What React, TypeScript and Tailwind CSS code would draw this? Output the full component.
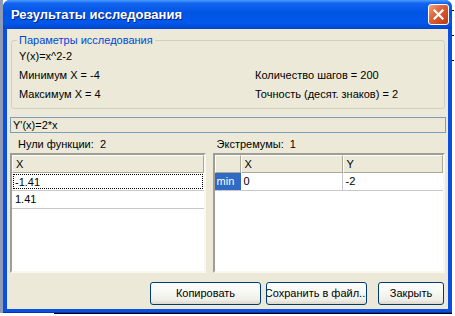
import React from "react";

const font = { fontFamily: '"Liberation Sans", Arial, sans-serif' };

function XpButton({ label, width }: { label: string; width: string }) {
  return (
    <button
      className={`${width} h-[23px] rounded-[3px] border border-[#003c74] bg-[linear-gradient(180deg,#ffffff_0%,#f7f7f3_45%,#efeee8_80%,#dcd8cc_100%)] text-[11px] leading-[13px] text-black flex items-center justify-center whitespace-nowrap overflow-hidden`}
    >
      {label}
    </button>
  );
}

function HeaderCell({ children, className = "" }: { children?: React.ReactNode; className?: string }) {
  return (
    <div
      className={`h-[18px] bg-[#ece9d8] border-t border-l border-t-white border-l-white border-b border-r border-b-[#aca899] border-r-[#aca899] pl-[2px] text-[11px] leading-[16px] ${className}`}
    >
      {children}
    </div>
  );
}

export default function App() {
  return (
    <div className="w-[455px] h-[316px] bg-white flex flex-col overflow-hidden" style={font}>
      <div className="h-[313px] flex">
        {/* strip of window behind */}
        <div className="w-[3px] h-[313px] bg-[#8e9ab6]" />

        {/* window */}
        <div className="w-[449px] h-[313px] flex flex-col rounded-t-[7px] bg-[#0a4fdf] border-b border-b-[#0032b8]">
          {/* title bar */}
          <div className="h-[29px] shrink-0 rounded-t-[7px] bg-[linear-gradient(180deg,#4c9cff_0%,#0f63ee_12%,#0054e3_45%,#0058ea_80%,#0244cc_100%)] flex items-center pl-[8px] pr-[3px]">
            <div className="flex-1 text-white font-bold text-[13px] leading-[16px] pt-[1px] [text-shadow:1px_1px_0_#0a1f80]">
              Результаты исследования
            </div>
            <div className="w-[21px] h-[21px] rounded-[3px] border border-white bg-[linear-gradient(135deg,#f2a483_0%,#e06a42_35%,#cf4b22_70%,#b83c1a_100%)] flex items-center justify-center">
              <svg width="11" height="11" viewBox="0 0 11 11">
                <path d="M1.5 1.5 L9.5 9.5 M9.5 1.5 L1.5 9.5" stroke="white" strokeWidth="2.2" strokeLinecap="square" />
              </svg>
            </div>
          </div>

          {/* client area */}
          <div className="flex-1 mx-[4px] mb-[3px] bg-[#ece9d8] flex flex-col px-[3px] text-[11px] leading-[13px] text-black">
            {/* group box */}
            <fieldset className="mt-[5px] ml-[1px] w-[434px] h-[75px] border border-[#d0d0bf] rounded-[3px]">
              <legend className="ml-[5px] px-[2px] text-[#0046d5] leading-[13px]">Параметры исследования</legend>
              <div className="pt-[3px] pl-[7px] flex flex-col gap-[6px]">
                <div>Y(x)=x^2-2</div>
                <div className="flex">
                  <div className="w-[236px]">Минимум X = -4</div>
                  <div>Количество шагов = 200</div>
                </div>
                <div className="flex">
                  <div className="w-[236px]">Максимум X = 4</div>
                  <div>Точность (десят. знаков) = 2</div>
                </div>
              </div>
            </fieldset>

            {/* derivative field */}
            <div className="mt-[8px] w-[436px] h-[16px] border border-[#7f9db9] bg-[#ece9d8] pl-[2px] leading-[14px]">
              Y'(x)=2*x
            </div>

            {/* tables */}
            <div className="mt-[5px] flex gap-[7px]">
              <div className="w-[196px] flex flex-col">
                <div className="pl-[8px] whitespace-pre h-[15px]">Нули функции:  2</div>
                <div className="h-[120px] border-2 border-t-[#a09e94] border-l-[#a09e94] border-b-[#f8f7f0] border-r-[#f8f7f0] bg-white flex flex-col">
                  <HeaderCell className="pl-[3px]">X</HeaderCell>
                  <div className="h-[18px] border-b border-[#c8c8c8] p-[1px]">
                    <div className="h-full border border-dotted border-black pl-[1px] leading-[14px]">-1.41</div>
                  </div>
                  <div className="h-[18px] border-b border-[#c8c8c8] pl-[3px] leading-[17px]">1.41</div>
                </div>
              </div>

              <div className="w-[233px] flex flex-col">
                <div className="pl-[4px] whitespace-pre h-[15px]">Экстремумы:  1</div>
                <div className="h-[120px] border-2 border-t-[#a09e94] border-l-[#a09e94] border-b-[#f8f7f0] border-r-[#f8f7f0] bg-white flex flex-col">
                  <div className="flex">
                    <HeaderCell className="w-[26px]" />
                    <HeaderCell className="w-[102px] pl-[3px]">X</HeaderCell>
                    <HeaderCell className="flex-1 pl-[3px]">Y</HeaderCell>
                  </div>
                  <div className="flex h-[18px] border-b border-[#c8c8c8]">
                    <div className="w-[26px] bg-[#316ac5] text-white pl-[2px] leading-[17px]">min</div>
                    <div className="w-[102px] border-r border-[#c8c8c8] pl-[3px] leading-[17px]">0</div>
                    <div className="flex-1 pl-[3px] leading-[17px]">-2</div>
                  </div>
                </div>
              </div>
            </div>

            {/* buttons */}
            <div className="mt-[9px] flex justify-end pr-[1px]">
              <XpButton label="Копировать" width="w-[111px]" />
              <div className="w-[5px]" />
              <XpButton label="Сохранить в файл..." width="w-[101px]" />
              <div className="w-[11px]" />
              <XpButton label="Закрыть" width="w-[66px]" />
            </div>
          </div>
        </div>

        <div className="flex-1 flex flex-col items-start pt-[10px] gap-[24px]">
          <div className="w-[2px] h-[1px] bg-black" />
          <div className="w-[2px] h-[1px] bg-black" />
          <div className="w-[2px] h-[1px] bg-black" />
        </div>
      </div>

      {/* content behind, below the window */}
      <div className="h-[3px] flex">
        <div className="w-[54px]" />
        <div className="w-[398px] border-t border-black" />
      </div>
    </div>
  );
}
